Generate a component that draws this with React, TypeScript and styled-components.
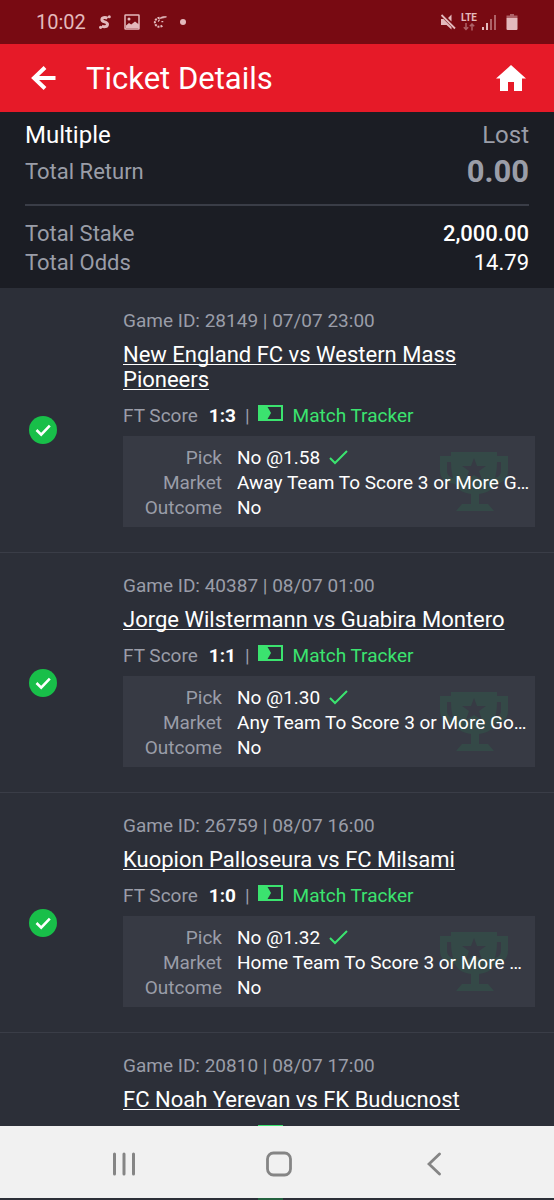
import React from "react";
import styled, { createGlobalStyle } from "styled-components";

const colors = {
  status: "#780a12",
  statusInk: "#e3b9bc",
  brand: "#e61a28",
  page: "#2c2f38",
  panel: "#373a44",
  summary: "#1b1d24",
  line: "#3a3d47",
  muted: "#9a9da8",
  text: "#ffffff",
  green: "#3be36f",
  badge: "#18bf49",
  trophy: "#344947",
  nav: "#f1f1f1",
  navInk: "#858585",
};

const GlobalStyle = createGlobalStyle`
  * { box-sizing: border-box; }
  body {
    margin: 0;
    background: ${colors.page};
    color: ${colors.text};
    font-family: Roboto, "Liberation Sans", sans-serif;
  }
  svg { display: block; flex: none; }
`;

const Screen = styled.div`
  display: flex;
  flex-direction: column;
  height: 100vh;
`;

const StatusBar = styled.div`
  flex: none;
  display: flex;
  justify-content: space-between;
  align-items: center;
  height: 44px;
  padding: 0 36px;
  background: ${colors.status};
  color: ${colors.statusInk};
`;

const StatusGroup = styled.div<{ $gap: number }>`
  display: flex;
  align-items: center;
  gap: ${(p) => p.$gap}px;
`;

const Clock = styled.span`
  font-size: 20px;
  line-height: 24px;
`;

const Network = styled.span`
  display: flex;
  flex-direction: column;
  align-items: center;
  font-size: 10px;
  font-weight: 700;
  line-height: 10px;
`;

const Header = styled.header`
  flex: none;
  display: flex;
  align-items: center;
  height: 68px;
  padding: 0 28px;
  background: ${colors.brand};
`;

const IconButton = styled.button`
  flex: none;
  display: flex;
  padding: 0;
  border: 0;
  background: none;
  color: inherit;
  cursor: pointer;
`;

const Title = styled.h1`
  flex: 1;
  margin: 0;
  padding: 2px 0 0 28px;
  font-size: 31px;
  line-height: 36px;
  font-weight: 400;
`;

const Summary = styled.section`
  flex: none;
  padding: 7px 25px 11px;
  background: ${colors.summary};
`;

const SummaryBlock = styled.dl`
  margin: 0;
  & + & {
    margin-top: 11px;
    padding-top: 13px;
    border-top: 2px solid ${colors.line};
  }
`;

const SummaryRow = styled.div<{ $height: number }>`
  display: flex;
  justify-content: space-between;
  align-items: center;
  height: ${(p) => p.$height}px;
`;

const SummaryLabel = styled.dt<{ $lead?: boolean }>`
  font-size: ${(p) => (p.$lead ? 24 : 22)}px;
  color: ${(p) => (p.$lead ? colors.text : colors.muted)};
`;

const SummaryValue = styled.dd<{ $size: number; $weight?: number; $muted?: boolean }>`
  margin: 0;
  font-size: ${(p) => p.$size}px;
  font-weight: ${(p) => p.$weight ?? 400};
  color: ${(p) => (p.$muted ? colors.muted : colors.text)};
`;

const Games = styled.main`
  flex: 1;
  min-height: 0;
  overflow-y: auto;
  scrollbar-width: none;
`;

const Game = styled.article`
  display: flex;
  align-items: center;
  padding: 20px 19px 0 29px;
  border-bottom: 1px solid ${colors.line};
`;

const GameBody = styled.div`
  flex: 1;
  min-width: 0;
  margin-left: 66px;
  padding-bottom: 25px;
`;

const GameMeta = styled.div`
  font-size: 19px;
  line-height: 25px;
  color: ${colors.muted};
`;

const GameTitle = styled.h2`
  margin: 9px 0 11px;
  font-size: 22px;
  line-height: 25px;
  font-weight: 400;
`;

const GameLink = styled.a`
  color: inherit;
  text-decoration: underline 1px;
  text-underline-offset: 2px;
  text-decoration-skip-ink: none;
`;

const ScoreRow = styled.div`
  display: flex;
  align-items: center;
  height: 25px;
  margin-bottom: 8px;
  font-size: 19px;
  color: ${colors.muted};
`;

const Score = styled.strong`
  margin: 0 9px 0 11px;
  color: ${colors.text};
`;

const Tracker = styled.a`
  display: flex;
  align-items: center;
  gap: 10px;
  margin-left: 8px;
  color: ${colors.green};
  text-decoration: none;
`;

const Panel = styled.div`
  position: relative;
  padding: 9px 4px 7px 0;
  background: ${colors.panel};
`;

const TrophyMark = styled.div`
  position: absolute;
  top: 16px;
  right: 27px;
`;

const Details = styled.dl`
  position: relative;
  display: grid;
  grid-template-columns: 99px 1fr;
  column-gap: 15px;
  margin: 0;
  font-size: 19px;
  line-height: 25px;
`;

const DetailLabel = styled.dt`
  text-align: right;
  color: ${colors.muted};
`;

const DetailValue = styled.dd`
  margin: 0;
  overflow: hidden;
  white-space: nowrap;
  text-overflow: ellipsis;
`;

const PickValue = styled(DetailValue)`
  display: flex;
  align-items: center;
  gap: 9px;
`;

const NavBar = styled.nav`
  flex: none;
  display: flex;
  align-items: center;
  height: 72px;
  padding: 4px 43px 0 46px;
  background: ${colors.nav};
  color: ${colors.navInk};
`;

const NavButton = styled(IconButton)`
  flex: 1;
  justify-content: center;
`;

const Peek = styled.div`
  flex: none;
  display: flex;
  height: 2px;
  padding-left: 258px;
  background: ${colors.page};
  &::before {
    content: "";
    width: 25px;
    background: #24623f;
  }
`;

const ShareLogo = () => (
  <svg width="12" height="14" viewBox="0 0 12 14" fill="none" aria-hidden="true">
    <path
      d="M8.500 3.300C6 1.800 2.700 2.500 2.900 4.900 3.100 7.300 8.700 6.500 8.500 9.400 8.300 12 5 12.300 2.800 10.900"
      stroke="currentColor"
      strokeWidth="3"
    />
    <circle cx="10.300" cy="1.700" r="1.500" fill="currentColor" />
    <circle cx="1.600" cy="12.300" r="1.600" fill="currentColor" />
  </svg>
);

const PictureIcon = () => (
  <svg width="16" height="16" viewBox="0 0 16 16" aria-hidden="true">
    <rect x="1" y="1" width="14" height="14" rx=".5" fill="none" stroke="currentColor" strokeWidth="1.500" />
    <path d="M2 11.500 5 9l2.200 1.500L11 7.500l4 3V14H2z" fill="currentColor" />
    <circle cx="5" cy="5" r="1.500" fill="currentColor" />
  </svg>
);

const SwirlIcon = () => (
  <svg width="14" height="14" viewBox="0 0 15 14" fill="none" stroke="currentColor" aria-hidden="true">
    <path d="M14.500 1.500C11 .8 8.500 1.500 7 3.500c1.500-.7 4.500-.6 7.500-2z" fill="currentColor" strokeWidth=".8" />
    <path d="M7 2.500A5 5 0 0 0 2 7.500a4.800 4.800 0 0 0 8.500 2.800" strokeWidth="2.200" strokeDasharray="2.200 1" />
    <path d="M5.500 6.500 7 4.500M9 6.500h2" strokeWidth="1.300" />
  </svg>
);

const Dot = () => (
  <svg width="6" height="6" viewBox="0 0 6 6" aria-hidden="true">
    <circle cx="3" cy="3" r="3" fill="currentColor" />
  </svg>
);

const MuteIcon = () => (
  <svg width="16" height="16" viewBox="0 0 16 16" aria-hidden="true">
    <path d="M1 5h2.500l8 8V15.500L6.500 11H1zM11.500 .5v7L8 4z" fill="currentColor" />
    <path d="m1.500 1 13.500 13.500" stroke="currentColor" strokeWidth="1.800" />
  </svg>
);

const DataArrows = () => (
  <svg width="12" height="8" viewBox="0 0 12 8" fill="none" stroke="currentColor" strokeWidth="1.500" opacity=".5" aria-hidden="true">
    <path d="M3 0v6.500M.8 4.300 3 6.500l2.200-2.200M9 7.500V1M6.800 3.200 9 1l2.200 2.200" />
  </svg>
);

const SignalIcon = () => (
  <svg width="14" height="15" viewBox="0 0 14 15" fill="currentColor" aria-hidden="true">
    <path d="M0 12h2v3H0zM4 8h2v7H4z" />
    <path d="M8 4h2v11H8zM12 0h2v15h-2z" opacity=".5" />
  </svg>
);

const BatteryIcon = () => (
  <svg width="17" height="16" viewBox="-5 0 17 16" fill="currentColor" aria-hidden="true">
    <path d="M4 0h4v1.500h3.500V4H.5V1.500H4z" opacity=".5" />
    <path d="M.5 4h11v11a1 1 0 0 1-1 1h-9a1 1 0 0 1-1-1z" />
  </svg>
);

const BackArrow = () => (
  <svg width="30" height="28" viewBox="0 0 30 28" fill="none" stroke="currentColor" strokeWidth="4" aria-hidden="true">
    <path d="M27.500 14H6M17 3.500 6 14l11 10.500" />
  </svg>
);

const HomeIcon = () => (
  <svg width="30" height="28" viewBox="0 0 30 28" fill="currentColor" aria-hidden="true">
    <path d="M15 1 30 14.500h-4V27h-8v-9h-6v9H4V14.500H0z" />
  </svg>
);

const WonBadge = () => (
  <svg width="28" height="28" viewBox="0 0 28 28" role="img" aria-label="Won">
    <circle cx="14" cy="14" r="14" fill={colors.badge} />
    <path d="m7.500 14 4.700 4.700 8.600-9" fill="none" stroke="#fff" strokeWidth="2.600" />
  </svg>
);

const TrackerIcon = () => (
  <svg width="25" height="21" viewBox="0 0 25 21" aria-hidden="true">
    <rect x="1" y="1" width="23" height="14" fill="none" stroke="currentColor" strokeWidth="2" />
    <path d="M1 1h8l4 7-4 7H1z" fill="currentColor" />
  </svg>
);

const TickIcon = () => (
  <svg width="19" height="15" viewBox="0 0 19 15" aria-hidden="true">
    <path d="m1 8 5 5L18 1" fill="none" stroke={colors.green} strokeWidth="2" />
  </svg>
);

const TrophyIcon = () => (
  <svg width="68" height="59" viewBox="0 0 68 59" fill={colors.trophy} aria-hidden="true">
    <path
      fillRule="evenodd"
      d="M11 0h46v4h11v15c0 8-5 12-13 13-3 6-8 9-16 10v10h9l6 7H16l6-7h9V42c-8-1-13-4-16-10C6 31 0 27 0 19V4h11zM11 10H7v9c0 3 2 6 6 7-1-4-2-9-2-16zm46 0c0 7-1 12-2 16 4-1 6-4 6-7v-9zM34 6l-3 8h-9l7 5-3 9 8-5 8 5-3-9 7-5h-9z"
    />
  </svg>
);

const RecentsIcon = () => (
  <svg width="24" height="24" viewBox="0 0 24 24" stroke="currentColor" strokeWidth="3" strokeLinecap="round" aria-hidden="true">
    <path d="M2.500 2v20M12 2v20M21.500 2v20" />
  </svg>
);

const HomeKeyIcon = () => (
  <svg width="26" height="26" viewBox="0 0 26 26" aria-hidden="true">
    <rect x="1.500" y="2" width="23" height="22" rx="6" fill="none" stroke="currentColor" strokeWidth="2.800" />
  </svg>
);

const BackKeyIcon = () => (
  <svg width="14" height="24" viewBox="0 0 14 24" fill="none" stroke="currentColor" strokeWidth="2.800" strokeLinecap="round" aria-hidden="true">
    <path d="M12.500 2 2 12l10.500 10" />
  </svg>
);

type GameInfo = {
  id: string;
  time: string;
  teams: string;
  score: string;
  odds: string;
  market: string;
};

const games: GameInfo[] = [
  { id: "28149", time: "07/07 23:00", teams: "New England FC vs Western Mass Pioneers", score: "1:3", odds: "1.58", market: "Away Team To Score 3 or More Goals" },
  { id: "40387", time: "08/07 01:00", teams: "Jorge Wilstermann vs Guabira Montero", score: "1:1", odds: "1.30", market: "Any Team To Score 3 or More Goals" },
  { id: "26759", time: "08/07 16:00", teams: "Kuopion Palloseura vs FC Milsami", score: "1:0", odds: "1.32", market: "Home Team To Score 3 or More Goals" },
  { id: "20810", time: "08/07 17:00", teams: "FC Noah Yerevan vs FK Buducnost", score: "1:0", odds: "1.30", market: "Any Team To Score 3 or More Goals" },
];

const GameCard = ({ game }: { game: GameInfo }) => (
  <Game>
    <WonBadge />
    <GameBody>
      <GameMeta>
        Game ID: {game.id} | {game.time}
      </GameMeta>
      <GameTitle>
        <GameLink href="#game">{game.teams}</GameLink>
      </GameTitle>
      <ScoreRow>
        FT Score
        <Score>{game.score}</Score>|
        <Tracker href="#tracker">
          <TrackerIcon />
          Match Tracker
        </Tracker>
      </ScoreRow>
      <Panel>
        <TrophyMark>
          <TrophyIcon />
        </TrophyMark>
        <Details>
          <DetailLabel>Pick</DetailLabel>
          <PickValue>
            No @{game.odds}
            <TickIcon />
          </PickValue>
          <DetailLabel>Market</DetailLabel>
          <DetailValue>{game.market}</DetailValue>
          <DetailLabel>Outcome</DetailLabel>
          <DetailValue>No</DetailValue>
        </Details>
      </Panel>
    </GameBody>
  </Game>
);

export default function App() {
  return (
    <>
      <GlobalStyle />
      <Screen>
        <StatusBar>
          <StatusGroup $gap={13}>
            <Clock>10:02</Clock>
            <ShareLogo />
            <PictureIcon />
            <SwirlIcon />
            <Dot />
          </StatusGroup>
          <StatusGroup $gap={5}>
            <MuteIcon />
            <Network>
              LTE
              <DataArrows />
            </Network>
            <SignalIcon />
            <BatteryIcon />
          </StatusGroup>
        </StatusBar>
        <Header>
          <IconButton aria-label="Back">
            <BackArrow />
          </IconButton>
          <Title>Ticket Details</Title>
          <IconButton aria-label="Home">
            <HomeIcon />
          </IconButton>
        </Header>
        <Summary>
          <SummaryBlock>
            <SummaryRow $height={31}>
              <SummaryLabel $lead>Multiple</SummaryLabel>
              <SummaryValue $size={24} $muted>Lost</SummaryValue>
            </SummaryRow>
            <SummaryRow $height={43}>
              <SummaryLabel>Total Return</SummaryLabel>
              <SummaryValue $size={31} $weight={700} $muted>0.00</SummaryValue>
            </SummaryRow>
          </SummaryBlock>
          <SummaryBlock>
            <SummaryRow $height={29}>
              <SummaryLabel>Total Stake</SummaryLabel>
              <SummaryValue $size={22} $weight={500}>2,000.00</SummaryValue>
            </SummaryRow>
            <SummaryRow $height={29}>
              <SummaryLabel>Total Odds</SummaryLabel>
              <SummaryValue $size={22}>14.79</SummaryValue>
            </SummaryRow>
          </SummaryBlock>
        </Summary>
        <Games>
          {games.map((game) => (
            <GameCard key={game.id} game={game} />
          ))}
        </Games>
        <NavBar aria-label="System">
          <NavButton aria-label="Recent apps">
            <RecentsIcon />
          </NavButton>
          <NavButton aria-label="Home screen">
            <HomeKeyIcon />
          </NavButton>
          <NavButton aria-label="Go back">
            <BackKeyIcon />
          </NavButton>
        </NavBar>
        <Peek />
      </Screen>
    </>
  );
}
